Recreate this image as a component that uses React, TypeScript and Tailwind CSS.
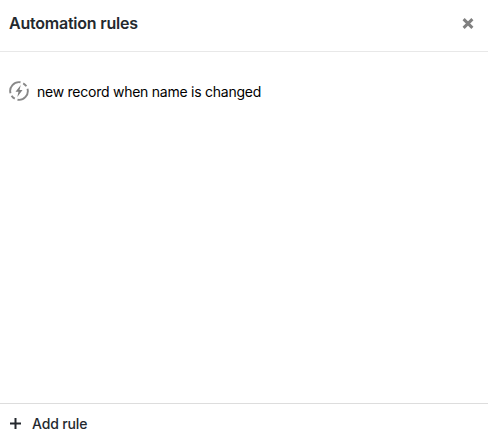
export default function App() {
  return (
    <div className="flex h-[439px] w-[488px] flex-col bg-white font-['Inter','Liberation_Sans',sans-serif] text-[#24292e]">
      <header className="flex h-[52px] items-start justify-between border-b border-[#e8e8e8] pl-[9px] pr-[14px] pt-[11px]">
        <h1 className="text-base font-semibold leading-6 tracking-[-0.22px]">Automation rules</h1>
        <button aria-label="Close" className="mt-[7px]">
          <svg width="12" height="11" viewBox="0 0 12 11" fill="none" stroke="#808080" strokeWidth="3"><path d="M1.6 1.1l8.8 8.8m0-8.8l-8.8 8.8" /></svg>
        </button>
      </header>
      <main className="flex-1 pl-[9px] pt-[29px] text-black">
        <div className="flex items-center gap-2">
          <svg className="mb-0.5" width="20" height="20" viewBox="0 0 20 20" fill="none" stroke="#888" strokeWidth="1.9">
            <path d="M1.5 12.3A8.8 8.8 0 0 1 11.5 1.3M18.5 7.7A8.8 8.8 0 0 1 8.5 18.7M14.2 2.3A8.8 8.8 0 0 1 17.4 5.3M5.8 17.7A8.8 8.8 0 0 1 2.6 14.7" />
            <path d="M11.8 4L6.5 10.8h3l-1.2 5.2 5.2-7h-3z" fill="#808080" stroke="none" />
          </svg>
          <span className="text-sm leading-5 tracking-[-0.25px]">new record when name is changed</span>
        </div>
      </main>
      <footer className="flex h-9 items-center gap-[11px] border-t border-[#ddd] pl-[10px] pt-[5px]">
        <svg className="mb-0.5" width="11" height="11" viewBox="0 0 11 11" stroke="#24292e" strokeWidth="2"><path d="M5.5 0v11M0 5.5h11" /></svg>
        <button className="text-sm font-medium leading-5 tracking-[-0.15px]">Add rule</button>
      </footer>
    </div>
  );
}
